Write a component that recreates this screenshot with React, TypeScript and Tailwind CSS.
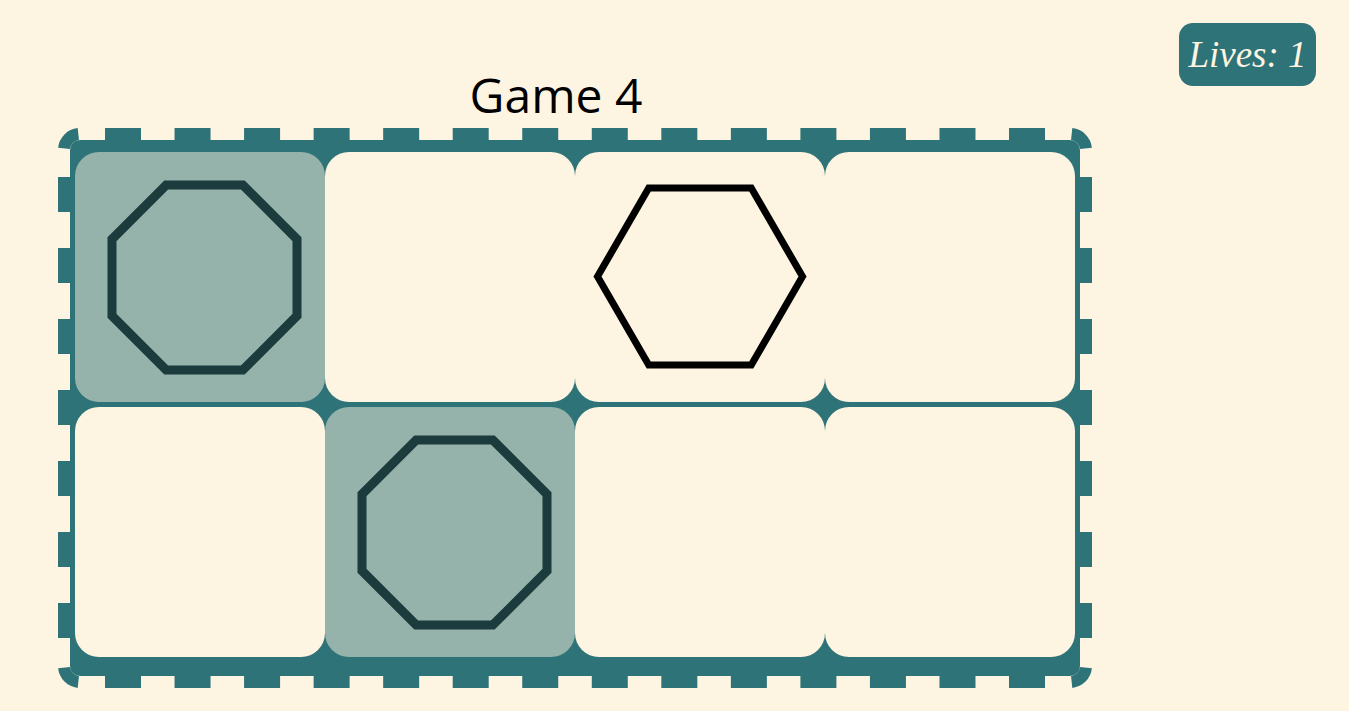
const cells = [
  { sel: true, shape: 'oct' },
  { sel: false, shape: null },
  { sel: false, shape: 'hex' },
  { sel: false, shape: null },
  { sel: false, shape: null },
  { sel: true, shape: 'oct' },
  { sel: false, shape: null },
  { sel: false, shape: null },
];

const BOARD_W = 1034;
const BOARD_H = 560;
const TEAL = '#2e7377';

function Octagon() {
  // flat-top regular octagon, apothem 92.5
  const cx = 129.5;
  const cy = 125.5;
  const a = 92.5;
  const b = 38.3;
  const pts = [
    [cx - b, cy - a], [cx + b, cy - a], [cx + a, cy - b], [cx + a, cy + b],
    [cx + b, cy + a], [cx - b, cy + a], [cx - a, cy + b], [cx - a, cy - b],
  ].map((p) => p.join(',')).join(' ');
  return (
    <svg width="250" height="250" viewBox="0 0 250 250">
      <polygon points={pts} fill="none" stroke="#1b3b3c" strokeWidth="9" strokeLinejoin="miter" />
    </svg>
  );
}

function Hexagon() {
  const cx = 125;
  const cy = 124.5;
  const r = 102.5;
  const h = 88.5;
  const pts = [
    [cx - r, cy], [cx - r / 2, cy - h], [cx + r / 2, cy - h],
    [cx + r, cy], [cx + r / 2, cy + h], [cx - r / 2, cy + h],
  ].map((p) => p.join(',')).join(' ');
  return (
    <svg width="250" height="250" viewBox="0 0 250 250">
      <polygon points={pts} fill="none" stroke="#000000" strokeWidth="7" />
    </svg>
  );
}

// dashed frame drawn over the board edge
function DashedFrame() {
  const arc = (cx: number, cy: number, a0: number, a1: number) => {
    const r = 16;
    const p = (a: number) => [cx + r * Math.cos((a * Math.PI) / 180), cy + r * Math.sin((a * Math.PI) / 180)];
    const [x0, y0] = p(a0);
    const [x1, y1] = p(a1);
    return `M${x0} ${y0} A${r} ${r} 0 0 1 ${x1} ${y1}`;
  };
  const top = Array.from({ length: 14 }, (_, i) => 47 + i * 69.54);
  const side = Array.from({ length: 7 }, (_, i) => 49 + i * 71);
  return (
    <svg
      className="absolute inset-0 pointer-events-none"
      width={BOARD_W}
      height={BOARD_H}
      viewBox={`0 0 ${BOARD_W} ${BOARD_H}`}
    >
      {top.map((x) => (
        <g key={x}>
          <rect x={x} y={0} width={36} height={12} fill={TEAL} />
          <rect x={x} y={BOARD_H - 12} width={36} height={12} fill={TEAL} />
        </g>
      ))}
      {side.map((y) => (
        <g key={y}>
          <rect x={0} y={y} width={12} height={35} fill={TEAL} />
          <rect x={BOARD_W - 12} y={y} width={12} height={35} fill={TEAL} />
        </g>
      ))}
      <g fill="none" stroke={TEAL} strokeWidth="12">
        <path d={arc(22, 22, 186, 264)} />
        <path d={arc(BOARD_W - 22, 22, 276, 354)} />
        <path d={arc(BOARD_W - 22, BOARD_H - 22, 6, 84)} />
        <path d={arc(22, BOARD_H - 22, 96, 174)} />
      </g>
    </svg>
  );
}

export default function App() {
  return (
    <div className="min-h-[711px] bg-[#fdf5e1] flex">
      <div className="pl-[58px] flex flex-col">
        {/* Title */}
        <h1
          className="w-[996px] text-center text-[48px] leading-[65px] text-black mt-[62px] mb-[1px]"
          style={{ fontFamily: '"Open Sans", "Noto Sans", sans-serif' }}
        >
          Game 4
        </h1>

        {/* Board */}
        <div className="relative w-[1034px] h-[560px] p-[12px]">
          <div className="bg-[#2e7377] rounded-[10px] pt-[12px] pb-[19px] px-[5px]">
            <div className="grid grid-cols-4 gap-y-[5px]">
              {cells.map((c, i) => (
                <div
                  key={i}
                  className={`w-[250px] h-[250px] rounded-[24px] ${c.sel ? 'bg-[#95b3ab]' : 'bg-[#fdf5e1]'}`}
                >
                  {c.shape === 'oct' && <Octagon />}
                  {c.shape === 'hex' && <Hexagon />}
                </div>
              ))}
            </div>
          </div>
          <DashedFrame />
        </div>
      </div>

      {/* Lives */}
      <div className="ml-auto pt-[23px] pr-[33px]">
        <div
          className="w-[137px] h-[63px] rounded-[14px] bg-[#2e7377] text-[#fdf5e1] italic text-[37px] flex items-center justify-center"
          style={{ fontFamily: '"Liberation Serif", serif' }}
        >
          Lives: 1
        </div>
      </div>
    </div>
  );
}
